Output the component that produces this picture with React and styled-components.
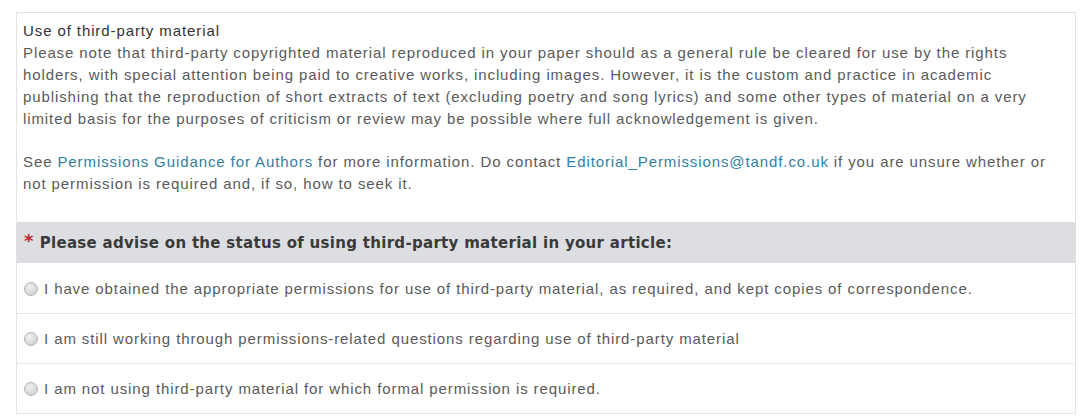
import React from "react";
import styled, { createGlobalStyle } from "styled-components";

const Global = createGlobalStyle`
  html, body { margin: 0; padding: 0; background: #ffffff; }
  body { font-family: "Liberation Sans", Arial, sans-serif; }
`;

const Panel = styled.section`
  margin: 12px 4px 0 16px;
  border: 1px solid #e2e2e2;
  border-bottom-color: #e6e6e6;
  background: #fff;
`;

const Intro = styled.div`
  padding: 7px 16px 27px 6px;
  font-size: 15px;
  line-height: 22px;
  color: #5a5a5a;
  letter-spacing: 0.9px;
`;

const Title = styled.div`
  color: #333;
  font-weight: normal;
`;

const Para = styled.p`
  margin: 0 0 21px 0;
  &:last-child { margin-bottom: 0; }
`;

const Link = styled.a`
  color: #2f7fa3;
  text-decoration: none;
`;

const QuestionHeader = styled.div`
  background: #dcdee1;
  height: 41px;
  display: flex;
  align-items: center;
  padding-left: 7px;
  font-family: "DejaVu Sans", Verdana, sans-serif;
  font-weight: bold;
  font-size: 15px;
  letter-spacing: 0.3px;
  color: #3a3a3a;
`;

const Required = styled.span`
  color: #c4262e;
  font-size: 18px;
  align-self: flex-start;
  margin-top: 10px;
  margin-right: 6px;
  line-height: 1;
`;

const Option = styled.label`
  display: flex;
  align-items: center;
  height: 49px;
  padding-left: 7px;
  border-top: 1px solid ${(p) => (p.$first ? "transparent" : "#e6e6e6")};
  font-size: 15px;
  color: #5a5a5a;
  letter-spacing: 0.9px;
`;

const Radio = styled.span`
  width: 12px;
  height: 12px;
  border-radius: 50%;
  border: 1px solid #b5b5b5;
  background: radial-gradient(circle at 40% 35%, #f2f2f2 0%, #d8d8d8 60%, #c8c8c8 100%);
  margin-right: 6px;
  flex: none;
`;

const options = [
  "I have obtained the appropriate permissions for use of third-party material, as required, and kept copies of correspondence.",
  "I am still working through permissions-related questions regarding use of third-party material",
  "I am not using third-party material for which formal permission is required.",
];

export default function App() {
  return (
    <>
      <Global />
      <Panel>
        <Intro>
          <Para>
            <Title>Use of third-party material</Title>
            Please note that third-party copyrighted material reproduced in your paper should as a general rule be cleared for use by the rights holders, with special attention being paid to creative works, including images. However, it is the custom and practice in academic publishing that the reproduction of short extracts of text (excluding poetry and song lyrics) and some other types of material on a very limited basis for the purposes of criticism or review may be possible where full acknowledgement is given.
          </Para>
          <Para>
            See <Link href="#">Permissions Guidance for Authors</Link> for more information. Do contact{" "}
            <Link href="#">Editorial_Permissions@tandf.co.uk</Link> if you are unsure whether or not permission is required and, if so, how to seek it.
          </Para>
        </Intro>
        <QuestionHeader>
          <Required>*</Required>
          Please advise on the status of using third-party material in your article:
        </QuestionHeader>
        {options.map((o, i) => (
          <Option key={i} $first={i === 0}>
            <Radio />
            {o}
          </Option>
        ))}
      </Panel>
    </>
  );
}
